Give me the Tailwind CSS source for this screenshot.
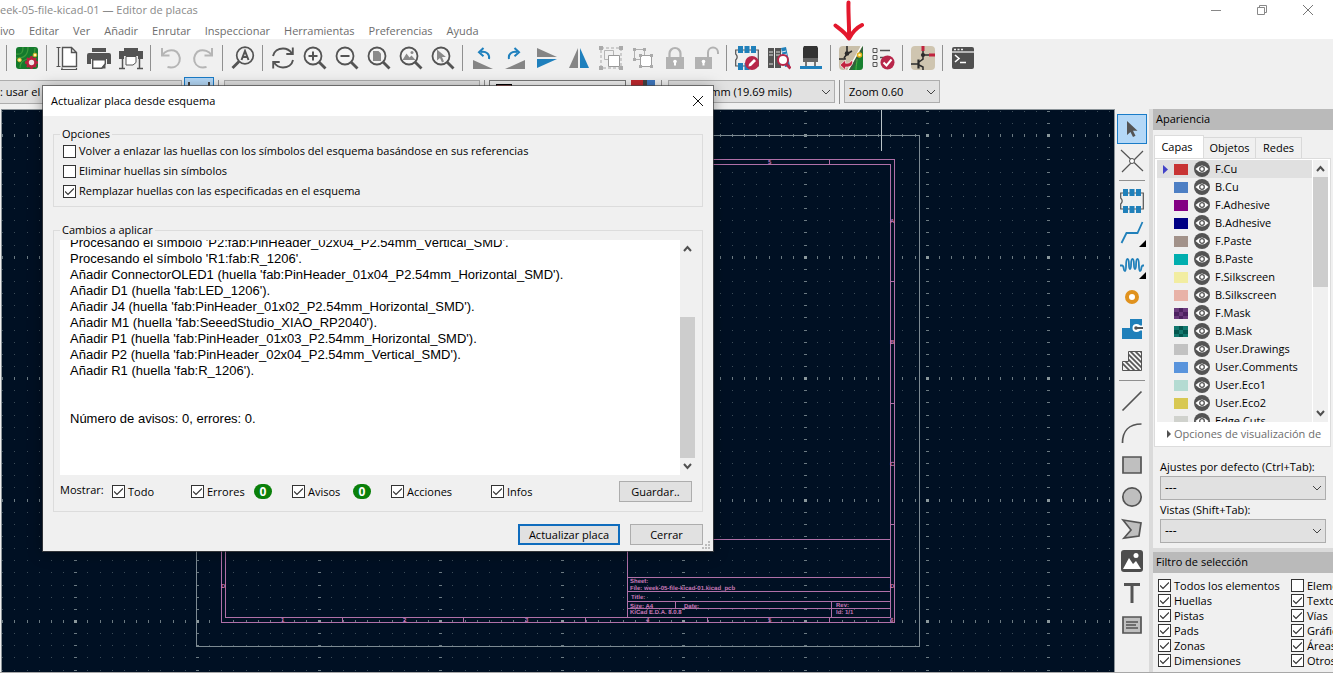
<!DOCTYPE html>
<html lang="es">
<head>
<meta charset="utf-8">
<title>Editor de placas</title>
<script src="https://cdn.jsdelivr.net/npm/@tailwindcss/browser@4"></script>
</head>
<body class="h-screen overflow-hidden bg-[#f0f0f0] font-['Open_Sans','Noto_Sans',sans-serif] text-[11px] leading-4 text-black">

<div class="relative flex h-full flex-col">
  <!-- Title bar -->
  <header class="flex h-5 shrink-0 items-center bg-white text-[#8a8a8a]">
    <h1 class="flex-1 text-[11px] whitespace-nowrap">eek-05-file-kicad-01 — Editor de placas</h1>
    <div class="flex items-center gap-[18px] pr-[11px]">
      <button aria-label="Minimizar" class="flex w-7 justify-center"><svg class="size-3" viewBox="0 0 12 12" fill="none" stroke="#888"><path d="M1 6.5h10"/></svg></button>
      <button aria-label="Restaurar" class="flex w-7 justify-center"><svg class="size-3" viewBox="0 0 12 12" fill="none" stroke="#888"><path d="M1.500 3.500h7v7h-7zM3.500 3.500v-2h7v7h-2"/></svg></button>
      <button aria-label="Cerrar ventana" class="flex w-7 justify-center"><svg class="size-3" viewBox="0 0 12 12" fill="none" stroke="#777"><path d="M1 1l10 10M11 1L1 11"/></svg></button>
    </div>
  </header>

  <!-- Menu bar -->
  <nav class="flex h-[19px] shrink-0 items-center gap-[14px] bg-white pt-[3px] text-[#6d6d6d]">
    <a href="#">ivo</a><a href="#">Editar</a><a href="#">Ver</a><a href="#">Añadir</a><a href="#">Enrutar</a><a href="#">Inspeccionar</a><a href="#">Herramientas</a><a href="#">Preferencias</a><a href="#">Ayuda</a>
  </nav>

  <!-- Main toolbar -->
  <div id="toolbar" role="toolbar" class="flex h-[38px] shrink-0 items-center pl-[3px]"></div>

  <!-- Option bar -->
  <div class="flex h-8 shrink-0 items-start pt-[3px]">
    <select aria-label="Ancho de pista" class="h-6 w-[182px] appearance-none border border-l-0 border-[#adadad] bg-[#e1e1e1] text-[11px]"><option>: usar el</option></select>
    <button aria-label="Ancho automático" class="ml-[2px] -mt-[3px] flex h-[30px] w-[30px] justify-center border border-[#1a7cc8] bg-[#b4d8f7] pt-1"><svg class="h-5 w-6" viewBox="0 0 24 20" fill="none" stroke="#444" stroke-width="2"><path d="M2 0v18M22 0v18M3 9h18"/></svg></button>
    <i class="mr-[5px] ml-1 h-6 w-px bg-[#909090]"></i>
    <select aria-label="Tamaño de vía" class="h-6 w-64 appearance-none border border-[#adadad] bg-[#e1e1e1]"><option></option></select>
    <i class="mx-1 h-6 w-px bg-[#909090]"></i>
    <div class="h-6 w-[137px] border border-[#777] bg-[#f0f0f0] pt-[3px] pl-1.5"><div class="h-4 w-4 border border-black bg-[#c83434]"></div></div>
    <div class="ml-[5px] flex h-6 w-6"><i class="flex-1 bg-[#c0282e]"></i><i class="w-1 bg-[#444]"></i><i class="w-2 bg-[#3f78c0]"></i></div>
    <i class="mx-[6px] h-6 w-px bg-[#909090]"></i>
    <span class="relative block">
      <select aria-label="Rejilla" class="h-[23px] w-[167px] appearance-none border border-[#adadad] bg-[#e1e1e1] pl-1 text-[11px]"><option>0.5000 mm (19.69 mils)</option></select>
      <svg class="pointer-events-none absolute top-2 right-1 h-2 w-[10px]" viewBox="0 0 10 8" fill="none" stroke="#444"><path d="M1 2l4 4 4-4"/></svg>
    </span>
    <i class="mx-[4px] h-6 w-px bg-[#909090]"></i>
    <span class="relative block">
      <select aria-label="Zoom" class="h-[23px] w-24 appearance-none border border-[#adadad] bg-[#e1e1e1] pl-1 text-[11px]"><option>Zoom 0.60</option></select>
      <svg class="pointer-events-none absolute top-2 right-1 h-2 w-[10px]" viewBox="0 0 10 8" fill="none" stroke="#444"><path d="M1 2l4 4 4-4"/></svg>
    </span>
  </div>

  <!-- Work area -->
  <main class="flex min-h-0 flex-1 border-b border-[#a8a8a8]">
    <section aria-label="Lienzo de la placa" class="relative ml-px min-w-0 flex-1 overflow-hidden border-t border-r border-l border-[#8c9499] bg-[#001023]">
      <svg class="absolute inset-0 size-full" shape-rendering="crispEdges">
        <g transform="translate(-2 -110)" fill="none">
          <path id="dots" stroke="#3d4d59"/>
          <path id="ticks" stroke="#6b7a82"/>
          <path id="majors" stroke="#8b989c" stroke-width="3"/>
          <path stroke="#7c8a92" d="M196.500 135.500H919.500V646.500H196.500z"/>
          <path stroke="#b9c3c7" d="M881.500 110V151"/>
          <g stroke="#b070a8">
            <path d="M221.500 159.500H894.500V622.500H221.500zM225.500 164.500H890.500V617.500H225.500z"/>
            <path d="M627.500 617V539.500H890M627.500 577.500H890M627.500 591.500H890M627.500 601.500H890M627.500 608.500H890M675.500 602V608M831.500 602V617"/>
            <path d="M342.500 618v4M463.500 618v4M585.500 618v4M707.500 618v4M829.500 618v4M829.500 160v4M707.500 160v4M891 281.500h4M891 403.500h4M891 524.500h4M222 524.500h4"/>
          </g>
          <g fill="#c878b8" class="text-[6px] font-bold" font-family="Liberation Sans, sans-serif" text-rendering="geometricPrecision">
            <text x="630" y="583">Sheet:</text>
            <text x="630" y="590">File: week-05-file-kicad-01.kicad_pcb</text>
            <text x="631" y="599">Title:</text>
            <text x="630" y="608">Size: A4</text>
            <text x="684" y="608">Date:</text>
            <text x="836" y="607">Rev:</text>
            <text x="630" y="614">KiCad E.D.A. 8.0.8</text>
            <text x="836" y="614">Id: 1/1</text>
            <text x="281" y="622">1</text><text x="403" y="622">2</text><text x="525" y="622">3</text><text x="646" y="622">4</text><text x="768" y="622">5</text><text x="890" y="622">6</text>
            <text x="768" y="164">5</text>
            <text x="890" y="223">A</text><text x="890" y="344">B</text><text x="890" y="466">C</text><text x="890" y="588">D</text><text x="221" y="588">D</text>
          </g>
        </g>
      </svg>
    </section>

    <div id="tools" role="toolbar" aria-orientation="vertical" class="flex w-[34px] shrink-0 flex-col items-center pt-1"></div>

    <aside class="flex w-[184px] shrink-0 flex-col border-l-4 border-[#dadada]">
      <h2 class="h-[21px] bg-[#bababa] pl-[3px] text-[11px] leading-5">Apariencia</h2>
      <div class="mt-1 flex h-6 items-end pl-px" role="tablist">
        <button role="tab" aria-selected="true" class="h-[23px] w-[50px] border border-b-0 border-[#dcdcdc] bg-white pr-1 text-[11px]">Capas</button>
        <button role="tab" class="h-[21px] w-[52px] border border-b-0 border-l-0 border-[#d9d9d9] text-[11px]">Objetos</button>
        <button role="tab" class="h-[21px] w-[46px] border border-b-0 border-l-0 border-[#d9d9d9] text-[11px]">Redes</button>
      </div>
      <div class="mr-[2px] ml-px flex h-[289px] flex-col border border-[#dcdcdc] bg-white px-[2px] pt-px">
        <div class="flex h-[262px]">
          <ul id="layers" class="min-w-0 flex-1 overflow-hidden bg-[#f0f0f0]"></ul>
          <div class="ml-px flex w-[15px] flex-col items-center bg-[#f0f0f0]">
            <svg class="h-[17px] w-[9px]" viewBox="0 0 9 17" fill="none" stroke="#505050" stroke-width="2"><path d="M1 11l3.500-4L8 11"/></svg>
            <i class="h-[110px] w-full bg-[#cdcdcd]"></i><i class="flex-1"></i>
            <svg class="h-[17px] w-[9px]" viewBox="0 0 9 17" fill="none" stroke="#505050" stroke-width="2"><path d="M1 6l3.500 4L8 6"/></svg>
          </div>
        </div>
        <button class="flex flex-1 items-center gap-[3px] overflow-hidden pl-2.5 text-[#6d6d6d] whitespace-nowrap"><svg class="h-2 w-1 shrink-0" viewBox="0 0 4 8"><path d="M0 0l4 4-4 4z" fill="#505050"/></svg>Opciones de visualización de</button>
      </div>
      <div class="flex flex-col pt-3 pr-[7px] pl-[7px]">
        <label for="preset" class="h-[17px] leading-4">Ajustes por defecto (Ctrl+Tab):</label>
        <span class="relative block">
          <select id="preset" class="block h-6 w-full appearance-none border border-[#adadad] bg-[#e1e1e1] pl-1 text-[12px]"><option>---</option></select>
          <svg class="pointer-events-none absolute top-2 right-1 h-2 w-[10px]" viewBox="0 0 10 8" fill="none" stroke="#444"><path d="M1 2l4 4 4-4"/></svg>
        </span>
        <label for="views" class="mt-[2px] h-[17px] leading-4">Vistas (Shift+Tab):</label>
        <span class="relative block">
          <select id="views" class="block h-6 w-full appearance-none border border-[#adadad] bg-[#e1e1e1] pl-1 text-[12px]"><option>---</option></select>
          <svg class="pointer-events-none absolute top-2 right-1 h-2 w-[10px]" viewBox="0 0 10 8" fill="none" stroke="#444"><path d="M1 2l4 4 4-4"/></svg>
        </span>
      </div>
      <h2 class="mt-[5px] h-[25px] border-t-4 border-[#dadada] bg-[#bababa] pl-[3px] text-[11px] leading-5">Filtro de selección</h2>
      <div class="flex gap-[2px] overflow-hidden pt-[5px] pl-[5px]">
        <div id="filterA" class="flex w-[131px] shrink-0 flex-col"></div>
        <div id="filterB" class="flex flex-col"></div>
      </div>
    </aside>
  </main>

  <!-- Pointer arrow over the toolbar -->
  <svg class="pointer-events-none absolute top-0 left-[832px] h-[42px] w-8" viewBox="0 0 32 42" fill="none" stroke="#e3182d" stroke-width="4" stroke-linecap="round" stroke-linejoin="round"><path d="M16.500 2.500C16 12 17.500 28 17 38M3.500 25.500C8 29 14 33 17 38.500C20 33 24 28 30 25"/></svg>

  <!-- Dialog -->
  <section role="dialog" aria-labelledby="dlgTitle" class="absolute top-[86px] left-[43px] flex w-[670px] flex-col bg-[#f0f0f0] shadow-[0_0_0_1px_rgba(70,70,70,0.7),0_2px_14px_rgba(0,0,0,0.4)]">
    <header class="flex h-[30px] items-center justify-between bg-white pr-2 pl-2">
      <h2 id="dlgTitle">Actualizar placa desde esquema</h2>
      <button aria-label="Cerrar" class="flex size-[14px] items-center justify-center"><svg class="size-3" viewBox="0 0 12 12" fill="none" stroke="#111"><path d="M1 1l10 10M11 1L1 11"/></svg></button>
    </header>
    <div class="flex flex-col px-[10px] pt-[10px]">
      <fieldset class="h-[81px] border border-[#dcdcdc] px-[9px]">
        <legend class="-ml-[3px] px-[2px]">Opciones</legend>
        <div id="opts" class="-mt-px flex flex-col"></div>
      </fieldset>
      <fieldset class="mt-[15px] h-[290px] border border-[#dcdcdc] pr-[7px] pl-[6px]">
        <legend class="px-[2px]">Cambios a aplicar</legend>
        <div class="mt-[2px] flex h-[235px]">
          <div role="log" class="flex flex-1 flex-col justify-end overflow-hidden bg-white pb-12 pl-[10px] font-['Liberation_Sans',sans-serif] text-[13px] leading-4 whitespace-nowrap">
            <p>Procesando el símbolo 'P2:fab:PinHeader_02x04_P2.54mm_Vertical_SMD'.</p>
            <p>Procesando el símbolo 'R1:fab:R_1206'.</p>
            <p>Añadir ConnectorOLED1 (huella 'fab:PinHeader_01x04_P2.54mm_Horizontal_SMD').</p>
            <p>Añadir D1 (huella 'fab:LED_1206').</p>
            <p>Añadir J4 (huella 'fab:PinHeader_01x02_P2.54mm_Horizontal_SMD').</p>
            <p>Añadir M1 (huella 'fab:SeeedStudio_XIAO_RP2040').</p>
            <p>Añadir P1 (huella 'fab:PinHeader_01x03_P2.54mm_Horizontal_SMD').</p>
            <p>Añadir P2 (huella 'fab:PinHeader_02x04_P2.54mm_Vertical_SMD').</p>
            <p>Añadir R1 (huella 'fab:R_1206').</p>
            <p class="mt-8">Número de avisos: 0, errores: 0.</p>
          </div>
          <div class="flex w-[15px] flex-col items-center">
            <svg class="h-[17px] w-[9px]" viewBox="0 0 9 17" fill="none" stroke="#505050" stroke-width="2"><path d="M1 11l3.500-4L8 11"/></svg>
            <i class="flex-1"></i><i class="h-[141px] w-full bg-[#cdcdcd]"></i>
            <svg class="h-[17px] w-[9px]" viewBox="0 0 9 17" fill="none" stroke="#505050" stroke-width="2"><path d="M1 6l3.500 4L8 6"/></svg>
          </div>
        </div>
        <div class="flex items-center pt-1.5 pr-[3px]">
          <span class="w-[52px] pb-[3px]">Mostrar:</span>
          <div id="show" class="flex flex-1 items-center"></div>
          <button class="h-[21px] w-[73px] border border-[#adadad] bg-[#e1e1e1]">Guardar..</button>
        </div>
      </fieldset>
      <div class="flex justify-end gap-[10px] pt-3 pb-1.5">
        <button class="h-[21px] w-[102px] border-2 border-[#0f6cbd] bg-[#e1e1e1]">Actualizar placa</button>
        <button class="h-[21px] w-[73px] border border-[#adadad] bg-[#e1e1e1]">Cerrar</button>
      </div>
    </div>
    <svg class="absolute right-[3px] bottom-[2px] size-2" viewBox="0 0 8 8" fill="#bdbdbd"><path d="M6 0h2v2H6zM3 3h2v2H3zM6 3h2v2H6zM0 6h2v2H0zM3 6h2v2H3zM6 6h2v2H6z"/></svg>
  </section>
</div>

<script>
const G = '#545454';
const lens = inner => `<circle cx="10" cy="10" r="8.500" fill="#f4f4f4" stroke="${G}" stroke-width="1.800"/>${inner}<path d="M16 16l6.500 6.500" stroke="${G}" stroke-width="2.800"/>`;
const page = 'M7.500 1.500h9l5 5v14h-14zM16.500 1.500v5h5';
const icons = {
  board: `<rect x="1" y="1" width="22" height="22" rx="3" fill="#147a2c"/><path d="M1 8c6 1 7-2 7-7M1 12c9 1 12-4 12-11M5 22c0-6 3-8 8-9s7-5 7-11" stroke="#3c9a3c" stroke-width="1.200"/><circle cx="4.500" cy="14" r="1.800" fill="#fff6a8" stroke="#d9b42a"/><circle cx="20" cy="9" r="1.800" fill="#fff6a8" stroke="#d9b42a"/><circle cx="16.500" cy="16.500" r="4" fill="#f0e4e6" stroke="#b8223f" stroke-width="2.600"/><path d="M16.500 10v2.500M16.500 20.500v2.500M10 16.500h2.500M20.500 16.500h2.500M12 12l2 2M19 19l2 2M21 12l-2 2M14 19l-2 2" stroke="#b8223f" stroke-width="2.400"/>`,
  pageset: `<path d="${page}" fill="#fff" stroke="${G}" stroke-width="1.400"/><path d="M3.500 1v20M1.500 1.500h4M1.500 20.500h4M6 23.500h16M7 21.500v3M21.500 22v2" stroke="${G}" stroke-width="1.200"/>`,
  print: `<path d="M5 2h14v5H5z" fill="${G}"/><path d="M0 9q0-2 2-2h20q2 0 2 2v9h-4v-5H4v5H0z" fill="${G}"/><path d="M2 6h20v1H2z" fill="#f0f0f0"/><path d="M5.700 13.700h12.600v4l-3.500 4.500H5.700z" fill="#fff" stroke="${G}" stroke-width="1.400"/><path d="M18.500 17v5.500H14z" fill="${G}"/>`,
  plot: `<path d="M5 2h14v3H5z" fill="${G}"/><path d="M0 5h24v8h-5v-3H5v3H0z" fill="${G}"/><path d="M7 10.500h10v6l-3 2.500H7z" fill="#fff" stroke="${G}"/><path d="M3.500 12v10M20.500 12v10M0 22.500h6M18 22.500h6" stroke="${G}" stroke-width="1.500"/>`,
  undo: `<path d="M3 2v7.500h7.500" stroke="#b5b5b5" stroke-width="2"/><path d="M3.500 9C6 5 11 3.500 15 4.500s7 6.500 5.500 11-6 7-12 5.500" stroke="#b5b5b5" stroke-width="2"/>`,
  redo: `<path d="M21 2v7.500h-7.500" stroke="#b5b5b5" stroke-width="2"/><path d="M20.500 9C18 5 13 3.500 9 4.500S2 11 3.500 15.500s6 7 12 5.500" stroke="#b5b5b5" stroke-width="2"/>`,
  find: `<circle cx="14" cy="9.500" r="8.300" stroke="${G}" stroke-width="1.700"/><path d="M8 15.500L1.500 22" stroke="${G}" stroke-width="2.800"/><path d="M10.500 14L14 5l3.500 9M12 11h4" stroke="${G}" stroke-width="2"/>`,
  refresh: `<path d="M2 10C3 5 7.500 2.500 12 2.500c4 0 7 2 9 5M22 14c-1 5-5.500 7.500-10 7.500-4 0-7-2-9-5" stroke="${G}" stroke-width="1.900"/><path d="M21.800 1.500v6.500h-6.500M2.200 22.500V16h6.500" stroke="${G}" stroke-width="1.900"/>`,
  zin: lens(`<path d="M5.500 10h9M10 5.500v9" stroke="${G}" stroke-width="2"/>`),
  zout: lens(`<path d="M5.500 10h9" stroke="${G}" stroke-width="2"/>`),
  zpage: lens(`<path d="M6 5h5.500L14 7.500V15H6z" fill="#8a8a8a"/>`),
  zobj: lens(`<path d="M3.500 14l4-6.500 3 4 2-2 4 4.500z" fill="#8a8a8a"/><circle cx="13" cy="6.500" r="1.500" fill="#8a8a8a"/>`),
  zsel: lens(`<path d="M6 3.500v11l3-2.500 2 4.500 2-1-2-4.500h4z" fill="#8a8a8a"/>`),
  rotl: `<path d="M2 14v9h20z" fill="#858585"/><path d="M18 13c1-5-3-8-8-7" stroke="#1f80bd" stroke-width="2"/><path d="M12.500 2L8 6.300l4.500 4" stroke="#1f80bd" stroke-width="2"/>`,
  rotr: `<path d="M22 14v9H2z" fill="#858585"/><path d="M6 13c-1-5 3-8 8-7" stroke="#1f80bd" stroke-width="2"/><path d="M11.500 2L16 6.300l-4.500 4" stroke="#1f80bd" stroke-width="2"/>`,
  flipv: `<path d="M2 2v9h20z" fill="#858585"/><path d="M2 22v-9h20z" fill="#1f80bd"/>`,
  fliph: `<path d="M2 22h9V2z" fill="#858585"/><path d="M22 22h-9V2z" fill="#1f80bd"/>`,
  group: `<path d="M2 2h20v20H2z" stroke="#a8a8a8" stroke-dasharray="3 2"/><path d="M5.500 4.500h9v9h-9z" stroke="#b5b5b5" fill="#f0f0f0"/><path d="M9.500 9.500h11v11h-11z" fill="#fff" stroke="#999"/><path d="M0 0h4v4H0zM20 0h4v4h-4zM0 20h4v4H0zM20 20h4v4h-4z" fill="#aaa"/>`,
  ungroup: `<path d="M3.500 3.500h10v10h-10z" stroke="#b0b0b0"/><path d="M9.500 9.500h11v11h-11z" fill="#fff" stroke="#a0a0a0"/><path d="M2 2h3v3H2zM12 2h3v3h-3zM2 12h3v3H2zM8 8h3v3H8zM19 8h3v3h-3zM8 19h3v3H8zM19 19h3v3h-3z" fill="#aaa"/>`,
  lock: `<path d="M3 11h18v12H3z" fill="#b2b2b2"/><path d="M6.500 11V7.500a5.500 5.500 0 0 1 11 0V11" stroke="#b2b2b2" stroke-width="2.200"/><path d="M12 14.500v5" stroke="#fff" stroke-width="2"/><circle cx="12" cy="15.500" r="1.800" fill="#fff"/>`,
  unlock: `<path d="M0 11h17v12H0z" fill="#b2b2b2"/><path d="M13 11V6.500a5 5 0 0 1 10 0V8" stroke="#b2b2b2" stroke-width="2"/><path d="M8.500 14.500v5" stroke="#fff" stroke-width="2"/><circle cx="8.500" cy="15.500" r="1.800" fill="#fff"/>`,
  fpedit: `<path d="M.7 4v4q3 3 0 6v6h22.600V4z" stroke="${G}" stroke-width="1.200"/><path d="M3 0h5v7H3zM9.500 0h5v7h-5zM16 0h5v7h-5zM3 17h5v7H3zM9.500 17h5v7h-5z" fill="#2080ba"/><circle cx="17" cy="17" r="7" fill="#b8264a"/><path d="M13.500 20.500l.5-2.500 5-5 2 2-5 5z" fill="#fff"/>`,
  fplib: `<path d="M1 2h6v20H1zM8 2h6v20H8z" fill="${G}"/><path d="M2 6h4M2 9h4M9 6h4M9 9h4M2 18h4" stroke="#ddd"/><path d="M14 2l5-1 4 19-5 1z" fill="#2080ba"/><path d="M15 6l4-1M16 9l4-1" stroke="#dbe9f3"/><circle cx="16" cy="14" r="5" fill="#fff" stroke="#b8264a" stroke-width="2"/><path d="M19.500 18l4 4.500" stroke="#b8264a" stroke-width="3"/>`,
  threed: `<path d="M5 0h13l1 2v10H4V2z" fill="#333"/><path d="M4 12h15v4H4z" fill="#666"/><path d="M7 16v4M16 16v4" stroke="#777" stroke-width="2"/><path d="M1 20h22v3H1z" fill="#1f80bd"/>`,
  update: `<rect width="24" height="24" rx="4" fill="#c9bfa9"/><path d="M24 0L10 24h10.500q3.500 0 3.500-3.500z" fill="#178030"/><path d="M24 0v5L13 24h-3z" fill="#35603c"/><path d="M22.500 0L9 24" stroke="#fff" stroke-width="1.200"/><path d="M18 13c0 4-1 6-1 11" stroke="#4fae45"/><path d="M8 0v8M8 8l5-3M8 8l-3 4M0 13h7" stroke="#2b2b2b" stroke-width="1.600"/><circle cx="8" cy="7.500" r="2.300" fill="#2b2b2b"/><circle cx="20.500" cy="9" r="2" fill="#fff6a8" stroke="#e5b01c" stroke-width="1.500"/><path d="M1 19l5.500-5v3.200c3 .5 5-.5 6.500-3.200 2 4-1 7.500-6.500 7v3z" fill="#c1233f" stroke="#fff" stroke-width=".6"/>`,
  drc: `<path d="M2 2.500h4v4H2zM2 9.500h4v4H2zM2 16.500h4v4H2z" stroke="${G}"/><path d="M9 4.500h10M9 11.500h4" stroke="${G}" stroke-width="1.300"/><circle cx="16.500" cy="16.500" r="7" fill="#b8264a"/><path d="M12.500 16.500l3 3 5-6" stroke="#fff" stroke-width="2"/>`,
  schem: `<rect width="24" height="24" rx="4" fill="#cfc5b0"/><path d="M12 4v5M12 9h6M12 9v4l-4 3M0 18h7M8 19l4 2v3" stroke="#2b2b2b" stroke-width="1.500"/><path d="M7.500 13.500v9" stroke="#2b2b2b" stroke-width="2.200"/><circle cx="12" cy="9" r="2.100" fill="#2b2b2b"/><path d="M10.500 0h3v5h-3zM18 7.500h6v3h-6z" fill="#c1233f"/>`,
  script: `<rect x="1" y="1" width="22" height="22" rx="2" fill="#505050"/><path d="M1 6h22" stroke="#eee" stroke-width="1.300"/><path d="M3 3.500h2M6.500 3.500h2M10 3.500h2" stroke="#eee" stroke-width="1.500"/><path d="M4 9l4 3.500L4 16M9 16.500h6" stroke="#fff" stroke-width="1.600"/>`,
  cursor: `<path d="M7 4v14l3.500-3 2.500 5 2.500-1.200-2.500-5h4.500z" fill="${G}"/>`,
  ratsnest: `<path d="M1 1l22 21M23 2L2 23" stroke="${G}" stroke-width="1.200"/><circle cx="12" cy="12" r="2.500" fill="#fff" stroke="${G}"/>`,
  fp: `<path d="M.7 4v5q3 3 0 6v5h22.600V4z" stroke="${G}" stroke-width="1.200"/><path d="M3 0h5v7H3zM9.500 0h5v7h-5zM16 0h5v7h-5zM3 17h5v7H3zM9.500 17h5v7h-5zM16 17h5v7h-5z" fill="#2080ba"/>`,
  track: `<path d="M1.500 22l5-10h11l5-11" stroke="#2080ba" stroke-width="1.800"/>`,
  tune: `<path d="M0 12.500h2c2.500 0 1 5.500 3 5.500s0-12 2.500-12 .5 10 2.500 10 0-10 2.500-10 .5 10 2.500 10 0-10 2.500-10 .5 12 2.500 12 .5-5.500 3-5.500h1" stroke="#2080ba" stroke-width="1.800"/>`,
  via: `<circle cx="12" cy="12" r="5" fill="#fff" stroke="#e0921e" stroke-width="4"/>`,
  zone: `<path d="M2 11h8V2h12v20H2z" fill="#2080ba"/><circle cx="16.500" cy="11" r="4" fill="#fff"/><path d="M16 11h7" stroke="#fff" stroke-width="5"/><path d="M16 11h7" stroke="${G}" stroke-width="2"/><circle cx="16" cy="11" r="1.800" fill="${G}"/>`,
  rule: `<clipPath id="ra"><path d="M2 12h7V2h13v20H2z"/></clipPath><path clip-path="url(#ra)" d="M-5 7l20 20M-5 2l25 25M-3 -1l28 28M2 -1l25 25M7-1l20 20M12-1l15 15M17-1l10 10" stroke="${G}" stroke-width="1.700"/><path d="M2.500 12.500h6v-10h13v19h-19z" stroke="${G}"/>`,
  line: `<path d="M2.500 21.500L21.500 2.500" stroke="${G}" stroke-width="1.700"/>`,
  arc: `<path d="M2.500 22C2.500 10 9 3 21.500 3" stroke="${G}" stroke-width="1.700"/>`,
  rect: `<path d="M3 4h18v16H3z" fill="#bfbfbf" stroke="${G}" stroke-width="1.700"/>`,
  circle: `<circle cx="12" cy="12" r="9.200" fill="#bfbfbf" stroke="${G}" stroke-width="1.700"/>`,
  poly: `<path d="M3 3l18 3-2 13-15 2 7-8z" fill="#bfbfbf" stroke="${G}" stroke-width="1.700"/>`,
  image: `<rect x="1" y="1" width="22" height="22" rx="3" fill="#4d4d4d"/><path d="M3 20l6-11 4 6 3-3 5 8z" fill="#fff"/><circle cx="16" cy="6.500" r="2.500" fill="#fff"/>`,
  text: `<path d="M4 3.500h16M12 3v19" stroke="${G}" stroke-width="3"/>`,
  textbox: `<path d="M3 4h18v16H3z" fill="#bfbfbf" stroke="${G}" stroke-width="1.700"/><path d="M6 9h12M6 12h10M6 15h12" stroke="${G}" stroke-width="1.300"/>`
};
const svg = n => `<svg class="size-6" viewBox="0 0 24 24" fill="none" aria-hidden="true">${icons[n]}</svg>`;

document.getElementById('toolbar').innerHTML =
  '| board | pageset print plot | undo redo | find | refresh zin zout zpage zobj zsel | rotl rotr flipv fliph group ungroup lock unlock | fpedit fplib threed | update drc | schem | script'
  .split(' ').map(n => n === '|'
    ? '<i class="flex w-2 shrink-0 pl-[3px]"><b class="h-[26px] w-px bg-[#909090]"></b></i>'
    : `<button aria-label="${n}" class="flex size-8 shrink-0 items-center justify-center">${svg(n)}</button>`).join('');

document.getElementById('tools').innerHTML =
  'cursor ratsnest | fp track tune via zone rule | line arc rect circle poly image text textbox'
  .split(' ').map(n => n === '|'
    ? '<i class="flex h-2 w-[26px] shrink-0 pt-[3px]"><b class="h-px w-full bg-[#909090]"></b></i>'
    : n === 'cursor'
    ? `<button aria-label="${n}" class="my-px flex h-[30px] w-[30px] shrink-0 items-center justify-center border border-[#1a7cc8] bg-[#b4d8f7]">${svg(n)}</button>`
    : `<button aria-label="${n}" class="relative flex size-8 shrink-0 items-center justify-center">${svg(n)}${n === 'track' || n === 'tune' ? '<svg class="absolute right-0.5 bottom-0.5 size-[7px]" viewBox="0 0 7 7"><path d="M7 0v7H0z"/></svg>' : ''}</button>`).join('');

const layers = [['F.Cu','#c83434'],['B.Cu','#4d7fc4'],['F.Adhesive','#840084'],['B.Adhesive','#000084'],['F.Paste','#a2928a'],['B.Paste','#00aeae'],['F.Silkscreen','#f2eda1'],['B.Silkscreen','#e8b2a7'],['F.Mask','#6a3a7c','#4c2260'],['B.Mask','#12786e','#04564e'],['User.Drawings','#c2c2c2'],['User.Comments','#5994dc'],['User.Eco1','#b4dbd2'],['User.Eco2','#d8c852'],['Edge.Cuts','#d0d2cd']];
document.getElementById('layers').innerHTML = layers.map(([n, c, d], i) => `
  <li class="flex h-[18px] items-center ${i ? '' : 'bg-[#e0e0e0]'}">
    <svg class="ml-[6px] h-[9px] w-[5px]" viewBox="0 0 5 9">${i ? '' : '<path d="M0 0l5 4.500L0 9z" fill="#4343c8"/>'}</svg>
    <svg class="ml-[6px] h-[11px] w-[14px]" viewBox="0 0 14 11" shape-rendering="crispEdges"><path d="M0 0h14v11H0z" fill="${c}"/>${d ? `<path d="M5 0h4v4H5zM0 4h5v4H0zM9 4h5v4H9zM5 8h4v3H5z" fill="${d}"/>` : ''}</svg>
    <svg class="ml-[6px] size-4" viewBox="0 0 16 16"><circle cx="8" cy="8" r="8" fill="#545454"/><path d="M1.500 8Q8 1 14.500 8Q8 15 1.500 8z" fill="#fff"/><circle cx="8" cy="8" r="2.300" fill="#fff" stroke="#545454" stroke-width="1.300"/></svg>
    <span class="ml-[5px]">${n}</span>
  </li>`).join('');

const tick = `<svg class="pointer-events-none absolute top-0.5 left-0.5 hidden size-[9px] peer-checked:block" viewBox="0 0 9 9" fill="none" stroke="#333" stroke-width="1.200"><path d="M0 4.500l3 3L9 1.500"/></svg>`;
const check = (label, on, cls) => `<label class="flex items-center gap-[3px] whitespace-nowrap ${cls}"><span class="relative block size-[13px]"><input type="checkbox" ${on ? 'checked' : ''} class="peer block size-[13px] appearance-none border border-[#333] bg-white">${tick}</span>${label}</label>`;
document.getElementById('opts').innerHTML =
  check('Volver a enlazar las huellas con los símbolos del esquema basándose en sus referencias', 0, 'h-5') +
  check('Eliminar huellas sin símbolos', 0, 'h-5') +
  check('Remplazar huellas con las especificadas en el esquema', 1, 'h-5');
const badge = '<span class="ml-px flex h-[15px] w-[18px] items-center justify-center rounded-full bg-[#0a800a] text-[12px] font-bold text-white">0</span>';
document.getElementById('show').innerHTML =
  check('Todo', 1, 'w-[79px]') + check('Errores', 1, 'w-[62px]') +
  `<span class="flex w-[39px]">${badge}</span>` + check('Avisos', 1, 'w-[60px]') +
  `<span class="flex w-[39px]">${badge}</span>` + check('Acciones', 1, 'w-[100px]') + check('Infos', 1, '');
document.getElementById('filterA').innerHTML = ['Todos los elementos','Huellas','Pistas','Pads','Zonas','Dimensiones'].map(t => check(t, 1, 'h-[15px]')).join('');
document.getElementById('filterB').innerHTML = ['Elementos bloqueados','Texto','Vías','Gráficos','Áreas de reglas','Otros elementos'].map((t, i) => check(t, i, 'h-[15px]')).join('');

// Grid: a dot every step, a heavier mark on every tenth row and column
let dots = '', ticks = '', majors = '';
const step = 12.163, stepY = 12.145;
for (let i = -6; i < 160; i++) for (let j = -42; j < 60; j++) {
  const x = Math.round(75.3 + i * step), y = Math.round(621 + j * stepY);
  const mx = i % 10 === 0, my = j % 10 === 0;
  if (mx && my) majors += `M${x - 1} ${y + .5}h3`;
  else if (mx) ticks += `M${x - 1} ${y + .5}h3`;
  else if (my) ticks += `M${x + .5} ${y - 1}v3`;
  else dots += `M${x} ${y + .5}h1`;
}
document.getElementById('dots').setAttribute('d', dots);
document.getElementById('ticks').setAttribute('d', ticks);
document.getElementById('majors').setAttribute('d', majors);
</script>
</body>
</html>
